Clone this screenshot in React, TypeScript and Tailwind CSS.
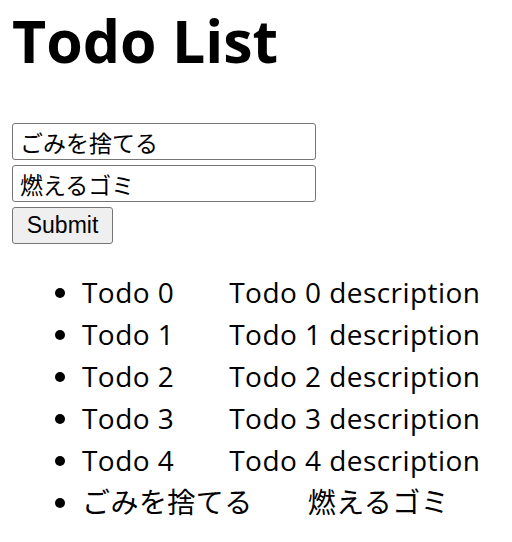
import { useState } from "react";

type Todo = { title: string; description: string };

const initialTodos: Todo[] = [
  { title: "Todo 0", description: "Todo 0 description" },
  { title: "Todo 1", description: "Todo 1 description" },
  { title: "Todo 2", description: "Todo 2 description" },
  { title: "Todo 3", description: "Todo 3 description" },
  { title: "Todo 4", description: "Todo 4 description" },
  { title: "ごみを捨てる", description: "燃えるゴミ" },
];

const font = "font-['Open_Sans','Noto_Sans_CJK_JP',sans-serif]";

export default function App() {
  const [title, setTitle] = useState("ごみを捨てる");
  const [description, setDescription] = useState("燃えるゴミ");
  const [todos, setTodos] = useState<Todo[]>(initialTodos);

  const handleSubmit = (e: React.FormEvent) => {
    e.preventDefault();
    if (!title) return;
    setTodos([...todos, { title, description }]);
  };

  return (
    <div className={`min-h-[542px] bg-white px-3 text-black ${font}`}>
      {/* Heading */}
      <h1 className="text-[59px] font-bold leading-[80px]">Todo List</h1>

      {/* Form */}
      <form onSubmit={handleSubmit} className="mt-[43px] flex flex-col items-start gap-[5px]">
        <input
          type="text"
          value={title}
          onChange={(e) => setTitle(e.target.value)}
          className="h-[37px] w-[304px] rounded-[3px] border border-[#767676] px-[7px] text-[23px] font-['Noto_Sans_CJK_JP',sans-serif] outline-none"
        />
        <input
          type="text"
          value={description}
          onChange={(e) => setDescription(e.target.value)}
          className="h-[37px] w-[304px] rounded-[3px] border border-[#767676] px-[7px] text-[23px] font-['Noto_Sans_CJK_JP',sans-serif] outline-none"
        />
        <button
          type="submit"
          className="h-[37px] w-[101px] rounded-[3px] border border-[#767676] bg-[#efefef] text-[23px] font-['Liberation_Sans',sans-serif]"
        >
          Submit
        </button>
      </form>

      {/* List */}
      <ul className="mt-[27px] list-disc pl-[70px] text-[28px] leading-[42px]">
        {todos.map((todo, i) => (
          <li key={i}>
            <span className="tracking-[0.45px]">{todo.title}</span>
            <span className="ml-[55px] tracking-[0.45px]">{todo.description}</span>
          </li>
        ))}
      </ul>
    </div>
  );
}
